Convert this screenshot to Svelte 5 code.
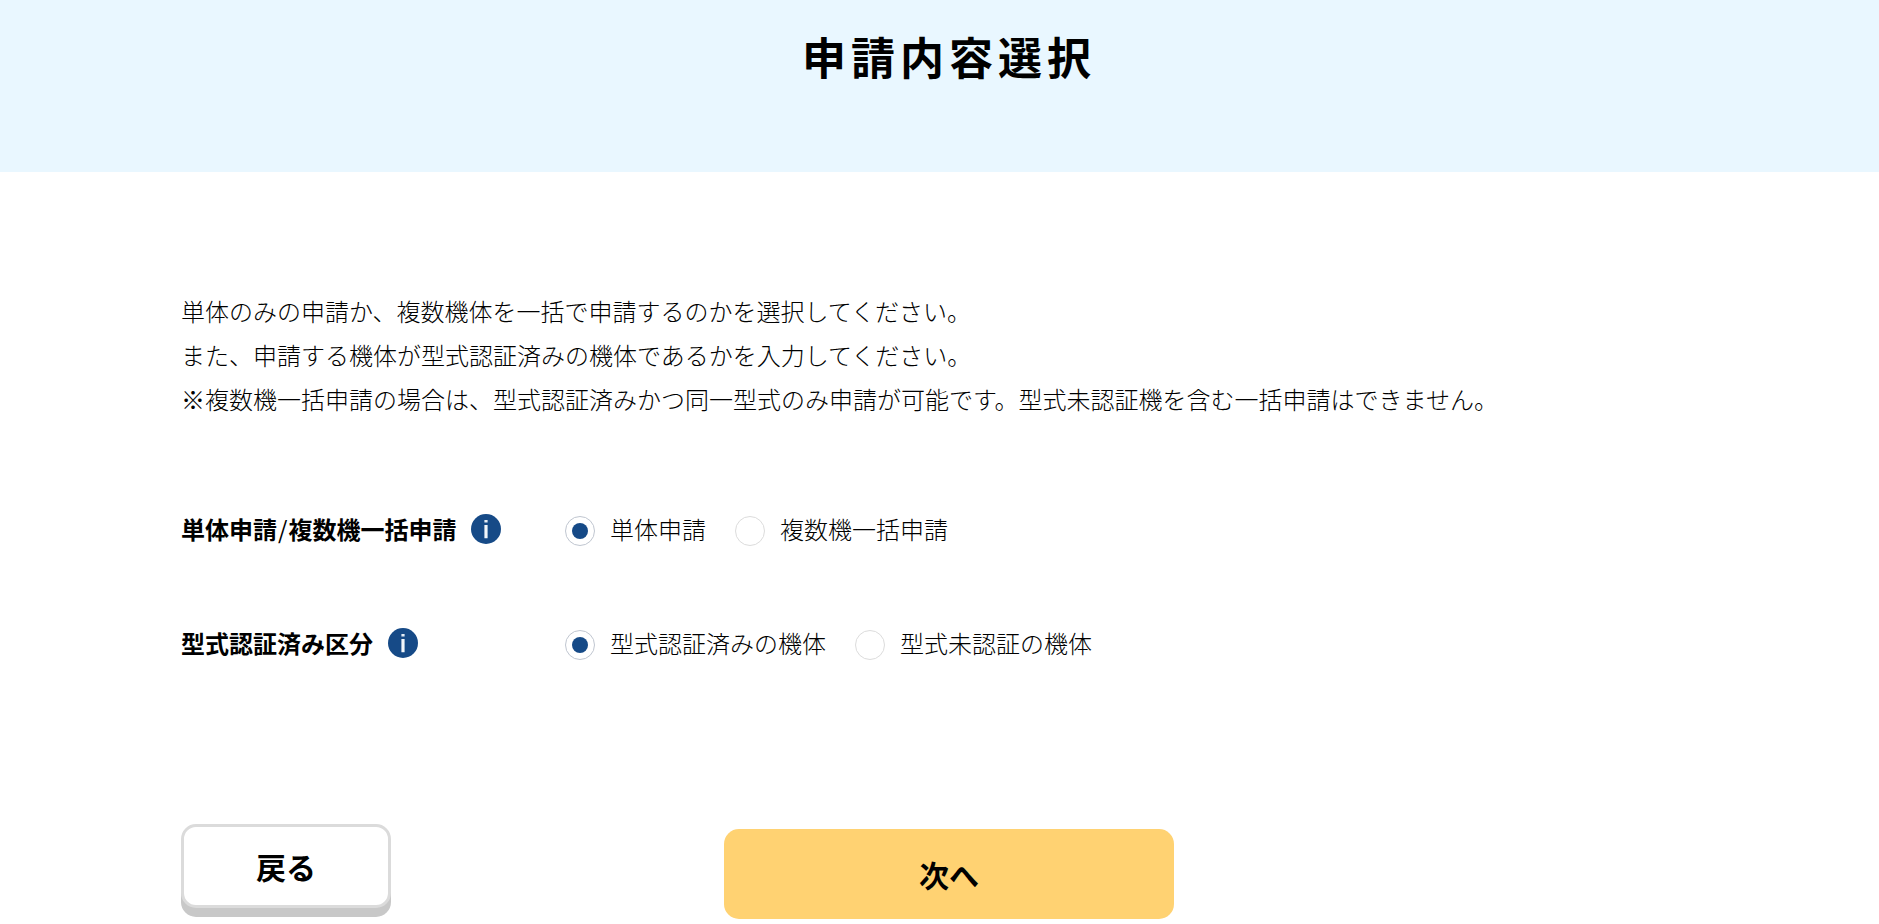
<script>
  let unit = $state('single');
  let certified = $state('yes');
</script>

{#snippet info(label)}
  <button type="button" class="info" aria-label={label}>
    <svg viewBox="0 0 30 30" width="30" height="30" aria-hidden="true">
      <circle cx="15" cy="15" r="15" fill="#164a87" />
      <rect x="13.4" y="6" width="3.2" height="2.5" fill="#e6edf5" />
      <rect x="13.4" y="11" width="3.2" height="13.2" rx="0.5" fill="#f2f6fa" />
    </svg>
  </button>
{/snippet}

<header class="hero">
  <h1>申請内容選択</h1>
</header>

<main>
  <p class="lead">
    単体のみの申請か、複数機体を一括で申請するのかを選択してください。<br />
    また、申請する機体が型式認証済みの機体であるかを入力してください。<br />
    ※複数機一括申請の場合は、型式認証済みかつ同一型式のみ申請が可能です。型式未認証機を含む一括申請はできません。
  </p>

  <form onsubmit={(e) => e.preventDefault()}>
    <div class="row" role="radiogroup" aria-labelledby="unit-label">
      <div class="name">
        <span id="unit-label">単体申請<span class="slash">/</span>複数機一括申請</span>
        {@render info('単体申請/複数機一括申請')}
      </div>
      <div class="options">
        <label><input type="radio" name="unit" value="single" bind:group={unit} />単体申請</label>
        <label><input type="radio" name="unit" value="multi" bind:group={unit} />複数機一括申請</label>
      </div>
    </div>

    <div class="row" role="radiogroup" aria-labelledby="cert-label">
      <div class="name">
        <span id="cert-label">型式認証済み区分</span>
        {@render info('型式認証済み区分')}
      </div>
      <div class="options">
        <label><input type="radio" name="cert" value="yes" bind:group={certified} />型式認証済みの機体</label>
        <label><input type="radio" name="cert" value="no" bind:group={certified} />型式未認証の機体</label>
      </div>
    </div>

    <div class="actions">
      <button type="button" class="back">戻る</button>
      <button type="submit" class="next">次へ</button>
    </div>
  </form>
</main>

<style>
  :global(body) {
    margin: 0;
    background: #fff;
    color: #000;
    font-family: 'Noto Sans CJK JP', sans-serif;
    font-size: 24px;
    font-weight: 300;
  }
  .hero,
  main {
    padding-left: 181px;
    padding-right: 162px;
  }
  .hero {
    padding-top: 24px;
    padding-bottom: 84px;
    background: #e9f7ff;
  }
  h1 {
    margin: 0;
    font-size: 44px;
    line-height: 64px;
    font-weight: 700;
    letter-spacing: 5px;
    text-align: center;
  }
  main {
    padding-top: 117px;
  }
  .lead {
    margin: 0 0 86px;
    line-height: 44px;
  }
  .row {
    display: grid;
    grid-template-columns: 384px 1fr;
    align-items: center;
    min-height: 43px;
    margin-bottom: 71px;
  }
  .name {
    display: flex;
    align-items: center;
    gap: 15px;
    font-weight: 700;
  }
  .slash {
    padding: 0 1px;
    font-weight: 400;
  }
  .info {
    display: flex;
    padding: 0;
    border: 0;
    background: none;
    cursor: pointer;
  }
  .options {
    display: flex;
    flex-wrap: wrap;
    gap: 29px;
  }
  label {
    display: flex;
    align-items: center;
    gap: 15px;
  }
  input {
    appearance: none;
    display: grid;
    place-items: center;
    box-sizing: border-box;
    width: 30px;
    height: 30px;
    margin: 5px 0 0;
    border: 1px solid #dcdcdc;
    border-radius: 50%;
    background: #fff;
  }
  input:checked {
    border-color: #c0c6d0;
  }
  input:checked::before {
    content: '';
    width: 16px;
    height: 16px;
    border-radius: 50%;
    background: #164a87;
  }
  .actions {
    display: grid;
    grid-template-columns: 1fr 450px 1fr;
    align-items: start;
    padding: 89px 0 5px;
  }
  .actions button {
    box-sizing: border-box;
    border-radius: 15px;
    color: #000;
    font-family: inherit;
    font-size: 30px;
    font-weight: 700;
    cursor: pointer;
  }
  .back {
    width: 210px;
    height: 84px;
    border: 3px solid #dbdbdb;
    background: #fff;
    box-shadow: 0 9px 0 #c8c8c8;
  }
  .next {
    height: 90px;
    margin-top: 5px;
    border: 0;
    background: #ffd272;
  }
</style>
